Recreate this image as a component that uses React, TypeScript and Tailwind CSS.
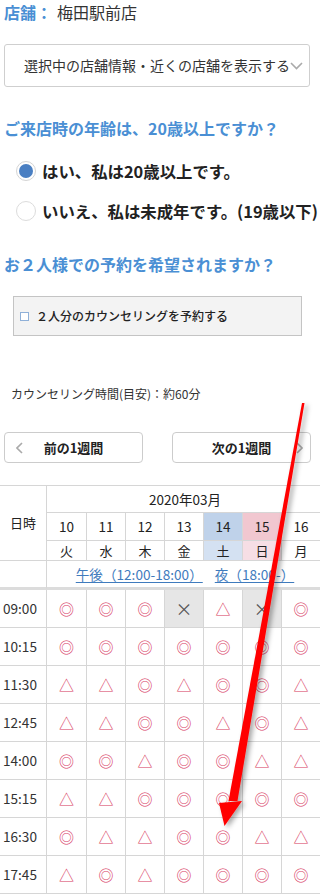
import React from "react";

const FONT = { fontFamily: '"Noto Sans CJK JP", "Noto Sans", sans-serif' };

const days = [
  { d: "10", w: "火", dbg: "", wbg: "" },
  { d: "11", w: "水", dbg: "", wbg: "" },
  { d: "12", w: "木", dbg: "", wbg: "" },
  { d: "13", w: "金", dbg: "", wbg: "" },
  { d: "14", w: "土", dbg: "bg-[#bfd2ea]", wbg: "bg-[#d4e1f2]" },
  { d: "15", w: "日", dbg: "bg-[#f1c7d0]", wbg: "bg-[#f6dee5]" },
  { d: "16", w: "月", dbg: "", wbg: "" },
];

const slots: [string, string][] = [
  ["09:00", "oooxtxo"],
  ["10:15", "ooooooo"],
  ["11:30", "ttotoot"],
  ["12:45", "ttootot"],
  ["14:00", "ootoott"],
  ["15:15", "ttooooo"],
  ["16:30", "ottoott"],
  ["17:45", "totoooo"],
];

function Sym({ s }: { s: string }) {
  if (s === "o") return <span className="text-[15px] leading-none text-[#d83b66]">◎</span>;
  if (s === "t") return <span className="text-[15px] leading-none text-[#d83b5e]">△</span>;
  return <span className="text-[17px] leading-none text-[#555]">×</span>;
}

function Chevron({ dir }: { dir: "left" | "right" | "down" }) {
  if (dir === "down")
    return (
      <svg width="13" height="8" viewBox="0 0 13 8" className="shrink-0">
        <polyline points="1,1 6.5,6.5 12,1" fill="none" stroke="#aaa" strokeWidth="1.6" />
      </svg>
    );
  return (
    <svg width="7" height="12" viewBox="0 0 7 12" className="shrink-0">
      <polyline
        points={dir === "left" ? "6,1 1,6 6,11" : "1,1 6,6 1,11"}
        fill="none"
        stroke="#aaa"
        strokeWidth="1.6"
      />
    </svg>
  );
}

export default function App() {
  return (
    <div className="relative w-[320px] h-[896px] overflow-hidden bg-white text-[#222]" style={FONT}>
      {/* store */}
      <div className="flex items-center h-[24px] pl-[4px] text-[16px] whitespace-nowrap">
        <span className="font-bold text-[#4a8fd4]">店舗：</span>
        <span className="ml-[5px] text-[#333]">梅田駅前店</span>
      </div>

      {/* dropdown */}
      <div className="mt-[20px] ml-[4px] w-[306px] h-[43px] border border-[#cfcfcf] rounded-[3px] flex items-center pl-[19px] whitespace-nowrap">
        <span className="text-[14px] text-[#333]">選択中の店舗情報・近くの店舗を表示する</span>
        <Chevron dir="down" />
      </div>

      {/* Q1 */}
      <div className="mt-[29px] pl-[4px] h-[24px] flex items-center text-[16px] font-bold text-[#4a8fd4] whitespace-nowrap">
        ご来店時の年齢は、20歳以上ですか？
      </div>
      <div className="mt-[11px] h-[40px] flex items-center pl-[16px] whitespace-nowrap">
        <span className="w-[20px] h-[20px] rounded-full border border-[#d4d4d4] flex items-center justify-center shrink-0">
          <span className="w-[14px] h-[14px] rounded-full bg-[#4a7fc2]" />
        </span>
        <span className="ml-[6px] text-[16.4px] font-bold">はい、私は20歳以上です。</span>
      </div>
      <div className="h-[40px] flex items-center pl-[16px] whitespace-nowrap">
        <span className="w-[20px] h-[20px] rounded-full border border-[#dcdcdc] bg-white shrink-0" />
        <span className="ml-[6px] text-[16.4px] font-bold">いいえ、私は未成年です。(19歳以下)</span>
      </div>

      {/* Q2 */}
      <div className="mt-[21px] pl-[4px] h-[24px] flex items-center text-[16px] font-bold text-[#4a8fd4] whitespace-nowrap">
        お２人様での予約を希望されますか？
      </div>
      <div className="mt-[20px] ml-[13px] w-[289px] h-[40px] border border-[#c4c4c4] bg-[#f3f3f3] flex items-center pl-[6px] whitespace-nowrap">
        <span className="w-[9px] h-[9px] border border-[#8fb0d8] bg-white shrink-0" />
        <span className="ml-[7px] text-[12px] font-medium text-[#222]">２人分のカウンセリングを予約する</span>
      </div>

      {/* duration */}
      <div className="mt-[49px] pl-[11px] h-[18px] flex items-center text-[12px] text-[#333] whitespace-nowrap">
        カウンセリング時間(目安)：約60分
      </div>

      {/* week buttons */}
      <div className="mt-[29px] flex pl-[4px] gap-[29px]">
        <div className="relative w-[139px] h-[31px] border border-[#cccccc] rounded-[4px] flex items-center justify-center">
          <span className="absolute left-[11px] top-[9px]">
            <Chevron dir="left" />
          </span>
          <span className="text-[13px] font-bold">前の1週間</span>
        </div>
        <div className="relative w-[139px] h-[31px] border border-[#cccccc] rounded-[4px] flex items-center justify-center">
          <span className="text-[13px] font-bold">次の1週間</span>
          <span className="absolute right-[7px] top-[9px]">
            <Chevron dir="right" />
          </span>
        </div>
      </div>

      {/* schedule table */}
      <div className="mt-[22px] grid grid-cols-[47px_40px_repeat(6,39px)] border-t border-[#d6d6d6] text-[13px] whitespace-nowrap">
        <div className="row-span-3 border-r border-b border-[#d6d6d6] flex items-center justify-center">日時</div>
        <div className="col-span-7 h-[27px] border-b border-[#d6d6d6] flex items-center justify-center pl-[2px] text-[13.5px]">
          2020年03月
        </div>
        {days.map((d) => (
          <div
            key={"d" + d.d}
            className={`h-[28px] border-r border-b border-[#d6d6d6] flex items-center justify-center text-[13.5px] ${d.dbg}`}
          >
            {d.d}
          </div>
        ))}
        {days.map((d) => (
          <div
            key={"w" + d.d}
            className={`h-[20px] border-r border-b border-[#d6d6d6] flex items-center justify-center ${d.wbg}`}
          >
            {d.w}
          </div>
        ))}
        <div className="h-[29px] border-r border-b-[3px] border-r-[#d6d6d6] border-b-[#dcdcdc]" />
        <div className="col-span-7 h-[29px] border-b-[3px] border-[#dcdcdc] flex items-center justify-center gap-[12px] pl-[2px] text-[13.6px] text-[#3f7bbd]">
          <span className="underline underline-offset-2">午後（12:00-18:00）</span>
          <span className="underline underline-offset-2">夜（18:00-）</span>
        </div>
        {slots.map(([t, s]) => (
          <React.Fragment key={t}>
            <div className="h-[38px] border-r border-b border-[#d6d6d6] flex items-center pl-[3px] text-[13.6px] text-[#333]">
              {t}
            </div>
            {s.split("").map((c, i) => (
              <div
                key={i}
                className={`h-[38px] border-r border-b border-[#d6d6d6] flex items-center justify-center ${
                  c === "x" ? "bg-[#e6e6e6]" : ""
                }`}
              >
                <Sym s={c} />
              </div>
            ))}
          </React.Fragment>
        ))}
      </div>

      {/* red arrow annotation */}
      <svg className="absolute left-0 top-0 pointer-events-none" width="320" height="896" viewBox="0 0 320 896">
        <defs>
          <filter id="sh" x="-50%" y="-10%" width="200%" height="120%">
            <feDropShadow dx="3" dy="2" stdDeviation="2.5" floodColor="#000" floodOpacity="0.35" />
          </filter>
        </defs>
        <g filter="url(#sh)">
          <polygon points="302,403 304.5,403 237.5,801 228.5,801" fill="#ff0000" />
          <polygon points="219,803 242,801 224.5,826" fill="#ff0000" />
        </g>
      </svg>
    </div>
  );
}
